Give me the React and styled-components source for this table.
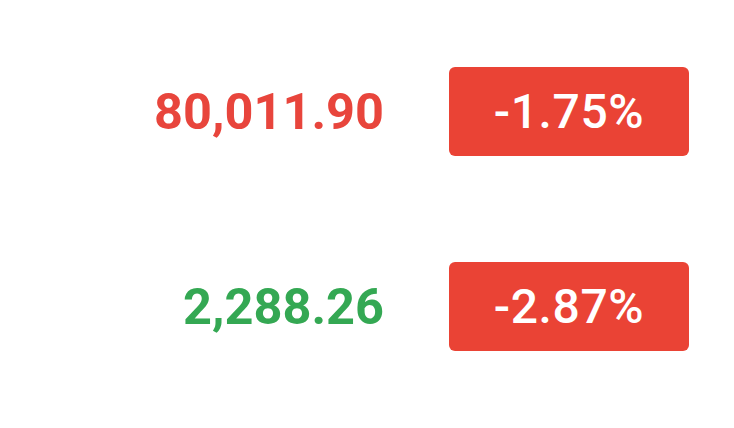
import React from "react"
import styled, { createGlobalStyle } from "styled-components"

const GlobalStyle = createGlobalStyle`
  body {
    margin: 0;
    background: #ffffff;
    font-family: Roboto, "Liberation Sans", sans-serif;
  }
`

const Board = styled.div`
  width: 734px;
  height: 428px;
  box-sizing: border-box;
  padding-top: 67px;
  display: grid;
  grid-template-columns: 384px 240px;
  grid-auto-rows: 89px;
  column-gap: 65px;
  row-gap: 106px;
`

const Price = styled.div`
  display: flex;
  align-items: center;
  justify-content: flex-end;
  font-size: 50.5px;
  font-weight: 700;
  color: ${(props) => props.color};
`

const Change = styled.div`
  display: flex;
  align-items: center;
  justify-content: center;
  border-radius: 6px;
  background: ${(props) => props.bg};
  color: #ffffff;
  font-size: 48px;
  font-weight: 500;
  letter-spacing: 0.6px;
  padding-bottom: 1px;
  box-sizing: border-box;
`

const quotes = [
  { price: "80,011.90", priceColor: "#e8453c", change: "-1.75%", changeBg: "#ea4335" },
  { price: "2,288.26", priceColor: "#34a853", change: "-2.87%", changeBg: "#ea4335" },
]

const App = () => {
  return (
    <>
      <GlobalStyle />
      <Board>
        {quotes.map((q) => (
          <React.Fragment key={q.price}>
            <Price color={q.priceColor}>{q.price}</Price>
            <Change bg={q.changeBg}>{q.change}</Change>
          </React.Fragment>
        ))}
      </Board>
    </>
  )
}

export default App
